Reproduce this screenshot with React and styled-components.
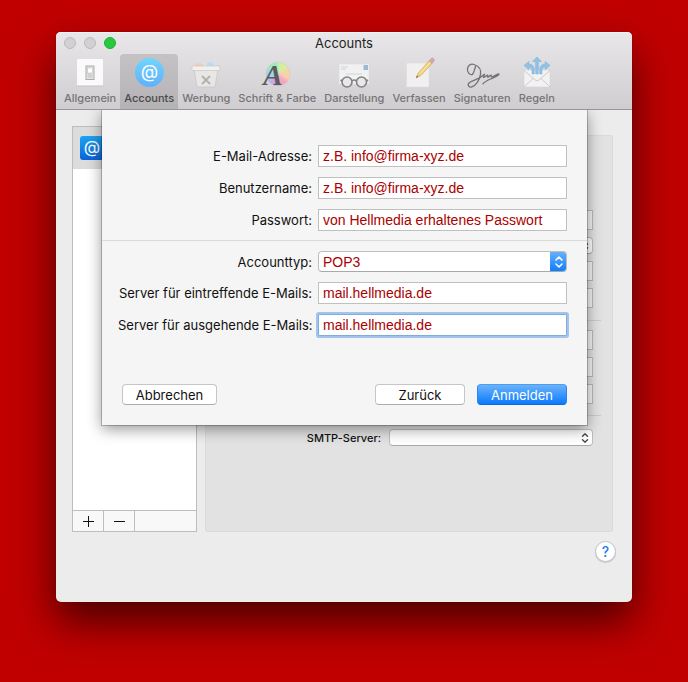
import styled, { createGlobalStyle, css } from 'styled-components';

const GlobalStyle = createGlobalStyle`
  * {
    box-sizing: border-box;
  }

  body {
    margin: 0;
    background: #c00000;
    font-family: Inter, Roboto, 'Liberation Sans', sans-serif;
    font-size: 13px;
    color: #111;
  }

  button, input, select {
    font-family: inherit;
    font-size: 13px;
    margin: 0;
  }
`;

const Desktop = styled.main`
  padding: 32px 56px 80px;
`;

const Window = styled.section`
  background: #ececec;
  border-radius: 5px;
  box-shadow: 0 20px 42px rgba(0, 0, 0, 0.62), 0 0 1px rgba(0, 0, 0, 0.5);
`;

const Header = styled.header`
  background: linear-gradient(#e9e7e9, #cfcdcf);
  border-bottom: 1px solid #979597;
  border-radius: 5px 5px 0 0;
  box-shadow: inset 0 1px 0 #f5f4f5;
`;

const TitleBar = styled.div`
  display: grid;
  grid-template-columns: 1fr auto 1fr;
  align-items: center;
  height: 22px;
  padding: 0 8px;
`;

const Title = styled.h1`
  margin: 0;
  font-size: 13px;
  font-weight: 400;
  line-height: 22px;
  color: #222;
`;

const Lights = styled.div`
  display: flex;
  gap: 8px;
`;

const Light = styled.button`
  width: 12px;
  height: 12px;
  padding: 0;
  border: 1px solid ${({ $on }) => ($on ? '#22ae35' : '#bcbabc')};
  border-radius: 50%;
  background: ${({ $on }) => ($on ? '#28c93f' : '#d2d0d2')};
`;

const Toolbar = styled.nav`
  display: flex;
  padding-left: 4px;
`;

const Tool = styled.button`
  display: flex;
  flex-direction: column;
  align-items: center;
  height: 55px;
  padding: 3px 4px 0;
  border: 0;
  border-radius: 4px 4px 0 0;
  background: ${({ $active }) => ($active ? 'rgba(0, 0, 0, 0.13)' : 'none')};
  color: ${({ $active }) => ($active ? '#4a494a' : '#767476')};

  svg {
    display: block;
    overflow: visible;
  }

  span {
    margin-top: 2px;
    font-size: 11px;
    font-weight: 500;
    line-height: 14px;
    white-space: nowrap;
  }
`;

const Body = styled.div`
  position: relative;
  padding: 16px 16px 40px;
`;

const Columns = styled.div`
  display: flex;
  gap: 8px;
  padding-right: 3px;
`;

const Sidebar = styled.aside`
  display: flex;
  flex-direction: column;
  width: 125px;
  min-height: 406px;
  border: 1px solid #bdbdbd;
  background: #fff;
`;

const AccountRow = styled.div`
  height: 42px;
  padding: 9px 7px;
  background: #dcdcdc;
`;

const AccountBadge = styled.div`
  width: 24px;
  height: 24px;
  border-radius: 3px;
  background: linear-gradient(#1ea4f3, #0b62d8);
  color: #fff;
  font-size: 17px;
  line-height: 22px;
  text-align: center;
`;

const SidebarFooter = styled.div`
  display: flex;
  height: 21px;
  margin-top: auto;
  border-top: 1px solid #bdbdbd;
  background: #f8f8f8;
`;

const FooterButton = styled.button`
  display: flex;
  align-items: center;
  justify-content: center;
  width: 31px;
  padding: 0;
  border: 0;
  border-right: 1px solid #bdbdbd;
  background: none;
`;

const Pane = styled.section`
  flex: 1;
  margin-top: 9px;
  padding: 74px 11px 0;
  border: 1px solid #dadada;
  border-radius: 3px;
  background: #e2e2e2;
`;

const PaneGroup = styled.div`
  display: flex;
  flex-direction: column;
  gap: 7px;
  padding-right: 8px;
`;

const PaneRow = styled.div`
  display: grid;
  grid-template-columns: 164px 1fr;
  gap: 8px;
  align-items: center;

  label {
    font-size: 11px;
    font-weight: 500;
    text-align: right;
  }
`;

const PaneInput = styled.input`
  grid-column: 2;
  min-width: 0;
  height: 20px;
  border: 1px solid #bababa;
  background: #f4f4f4;
`;

const Divider = styled.hr`
  height: 1px;
  margin: ${({ $margin }) => $margin || '0'};
  border: 0;
  background: ${({ $dark }) => ($dark ? '#cbcbcb' : '#dadada')};
`;

const SelectBox = styled.div`
  display: flex;
  grid-column: 2;
  height: ${({ $small }) => ($small ? '17px' : '21px')};
  border: 1px solid #bebebe;
  border-bottom-color: #a9a9a9;
  border-radius: 4px;
  background: #fff;
  overflow: hidden;

  select {
    flex: 1;
    min-width: 0;
    padding: 0 4px;
    border: 0;
    outline: 0;
    appearance: none;
    background: none;
  }
`;

const Stepper = styled.span`
  display: flex;
  align-items: center;
  justify-content: center;
  width: 14px;
  color: #444;

  ${({ $blue }) =>
    $blue &&
    css`
      width: 17px;
      margin: -1px -1px -1px 0;
      background: linear-gradient(#6bb3fa, #0b7bfd);
      color: #fff;
    `}
`;

const HelpBar = styled.div`
  display: flex;
  justify-content: flex-end;
  margin-top: 9px;
`;

const HelpButton = styled.button`
  width: 21px;
  height: 21px;
  padding: 0;
  border: 1px solid #c4c4c4;
  border-radius: 50%;
  background: #fff;
  box-shadow: 0 1px 1px rgba(0, 0, 0, 0.15);
  color: #1a7cf0;
  font-size: 14px;
  font-weight: 500;
  line-height: 18px;
`;

const Sheet = styled.form`
  position: absolute;
  top: 0;
  left: 46px;
  right: 45px;
  padding: 35px 0 20px;
  background: #f5f5f5;
  box-shadow: 0 0 0 1px rgba(0, 0, 0, 0.22), 0 4px 14px rgba(0, 0, 0, 0.42);
  clip-path: inset(0 -40px -40px -40px);
`;

const SheetGroup = styled.div`
  display: flex;
  flex-direction: column;
  gap: 10px;
  padding: 0 20px 0 16px;
`;

const SheetRow = styled.div`
  display: grid;
  grid-template-columns: 194px 1fr;
  gap: 6px;
  align-items: center;

  label {
    text-align: right;
    white-space: nowrap;
  }

  input, select {
    color: #ab0000;
    font-family: 'Liberation Sans', Arial, sans-serif;
    font-size: 14px;
  }
`;

const TextInput = styled.input`
  min-width: 0;
  height: 22px;
  padding: 0 4px;
  border: 1px solid #c0c0c0;
  outline: 0;
  background: #fff;

  ${({ $focused }) =>
    $focused &&
    css`
      border-color: #7fabde;
      border-radius: 1px;
      box-shadow: 0 0 0 2px #a3c4ec;
    `}
`;

const Buttons = styled.div`
  display: flex;
  gap: 12px;
  margin-top: 48px;
  padding: 0 20px;
`;

const PushButton = styled.button`
  width: 90px;
  height: 21px;
  padding: 0;
  border: 1px solid #c6c6c6;
  border-bottom-color: #adadad;
  border-radius: 4px;
  background: #fff;
  color: #111;
  line-height: 18px;

  ${({ $cancel }) =>
    $cancel &&
    css`
      width: 95px;
      margin-right: auto;
    `}

  ${({ $primary }) =>
    $primary &&
    css`
      border-color: #4a9ff5 #2787f3 #0d6be0;
      background: linear-gradient(#6bb3fa, #0b7bfd);
      color: #fff;
    `}
`;

const Icon = ({ children }) => (
  <svg width="32" height="32" viewBox="0 0 32 32" fill="none" aria-hidden="true">
    {children}
  </svg>
);

const GeneralIcon = () => (
  <Icon>
    <rect x="3" y="2.5" width="26" height="27" fill="#c4c2c4" />
    <rect x="3" y="2" width="26" height="26.5" fill="#fafafa" />
    <rect x="12" y="9" width="8" height="13.5" fill="#e6e6e6" stroke="#aaa" />
    <rect x="13.5" y="11" width="5" height="5" fill="#fff" stroke="#bbb" strokeWidth="0.6" />
    <rect x="13.5" y="16" width="5" height="5" fill="#d2d2d2" />
  </Icon>
);

const AccountsIcon = () => (
  <Icon>
    <defs>
      <linearGradient id="at" x1="0" y1="0" x2="0" y2="1">
        <stop offset="0" stopColor="#72d5fb" />
        <stop offset="1" stopColor="#5fb0fb" />
      </linearGradient>
    </defs>
    <circle cx="16.5" cy="15.5" r="14.5" fill="url(#at)" />
    <text x="16.5" y="21" textAnchor="middle" fontSize="18" fill="#fff">@</text>
  </Icon>
);

const JunkIcon = () => (
  <Icon>
    <path d="M4 10 6 6l5 1 3-2 4 2 5-2 3 2 2 4z" fill="#d8e3e8" />
    <path d="M4 9 7 6l6 1v3H4z" fill="#f0cfae" />
    <path d="m17 6 4-1 3 2-1 3h-6z" fill="#b9dcf0" />
    <path d="M4 12h24l-3 18H7z" fill="#e9e7e5" stroke="#c6c4c2" strokeWidth="0.7" />
    <rect x="2" y="9" width="28" height="4.5" rx="1" fill="#f2f0ee" stroke="#c9c7c5" strokeWidth="0.7" />
    <path d="m12 19 8 8m0-8-8 8" stroke="#b3b1af" strokeWidth="2" />
  </Icon>
);

const FontsIcon = () => (
  <Icon>
    <defs>
      <filter id="soft" x="-20%" y="-20%" width="140%" height="140%">
        <feGaussianBlur stdDeviation="1.5" />
      </filter>
      <clipPath id="wheel">
        <circle cx="17" cy="17" r="12" />
      </clipPath>
    </defs>
    <g clipPath="url(#wheel)">
      <rect x="3" y="3" width="28" height="28" fill="#e4e2e4" />
      <g filter="url(#soft)">
        <path d="M17 17V1h12l4 6z" fill="#d5efa0" />
        <path d="m17 17 16-10v20z" fill="#f8d3a8" />
        <path d="m17 17 16 10-6 6H17z" fill="#f7a5bd" />
        <path d="M17 17v16H5l-4-6z" fill="#c9a6ec" />
        <path d="M17 17 1 27V7z" fill="#9cd8ec" />
        <path d="M17 17 1 7l4-6h12z" fill="#9debb8" />
      </g>
    </g>
    <circle cx="17" cy="17" r="12" stroke="#c9c5c9" strokeWidth="0.5" />
    <text x="12" y="28" textAnchor="middle" fontFamily="Liberation Serif, serif" fontStyle="italic" fontWeight="700" fontSize="29" fill="#5c5b60">A</text>
  </Icon>
);

const ViewIcon = () => (
  <Icon>
    <rect x="1" y="7" width="30" height="20" fill="#f2f1f2" stroke="#dcdadc" strokeWidth="0.5" />
    <path d="M3 10h7M3 12h5M8 17h16" stroke="#c5cbd2" strokeWidth="0.8" />
    <rect x="25.5" y="8" width="4.5" height="5" fill="#9db8d2" />
    <circle cx="9" cy="25" r="5" fill="#e9e8e9" stroke="#838183" strokeWidth="1.6" />
    <circle cx="23.5" cy="25" r="5" fill="#e9e8e9" stroke="#838183" strokeWidth="1.6" />
    <path d="M14 24q2.2-2 4.5 0M4 24l-1.5-1M28.5 24l1.5-1" stroke="#838183" strokeWidth="1.6" />
  </Icon>
);

const ComposeIcon = () => (
  <Icon>
    <rect x="3.5" y="6" width="22.5" height="24" fill="#f1f0f1" stroke="#dedcde" strokeWidth="0.6" />
    <path d="m13 21 2.2-5L26 3.800l3 2.700L18 18.500z" fill="#efd07a" stroke="#cfa95a" strokeWidth="0.6" />
    <path d="m16.5 17.2 11-12" stroke="#f9e6a8" strokeWidth="1.2" />
    <path d="m26 3.8 1.8-2a2 2 0 0 1 3 2.7L29 6.500z" fill="#d9a5ae" stroke="#b5979c" strokeWidth="0.5" />
    <path d="m13 21 1-2.500 1.4 1.3z" fill="#666" />
  </Icon>
);

const SignatureIcon = () => (
  <Icon>
    <path
      d="M9.500 9.500C8.500 13 8 15.500 6.500 17.500 3.500 18.500 1 15 1.500 11.500 2 8 5 6.500 8 7.500c4.500 1.500 7.500 5 6.500 10C13.500 23 10 29 5.500 30c-3.500.5-4.500-3-1.500-4.800C8 23 13 22.500 18.500 17.200c-.5 1.500-1.500 3-.8 3.300 1 .4 3-2.800 4-2.400.7.3-.7 1.900 0 2.100 1 .3 2.300-2.200 3.300-2 .7.2-.3 1.600.4 1.700 1.800.2 4.600-2.900 7.600-2.900-.5 2.200-5.500 3.500-8.500 5-3.500 1.600-6 2.800-7.500 4.800"
      stroke="#757475"
      strokeWidth="1.3"
      strokeLinecap="round"
      strokeLinejoin="round"
    />
  </Icon>
);

const RulesIcon = () => (
  <Icon>
    <rect x="3" y="13" width="26" height="17" fill="#f3f2f3" stroke="#d6d4d6" strokeWidth="0.6" />
    <path d="m3 30 9.500-9M29 30l-9.500-9M3 13.500l11 9.500q2 1.500 4 0l11-9.500" stroke="#c8c6c8" strokeWidth="0.9" />
    <g fill="#8fc3e8" stroke="#75acd4" strokeWidth="0.5">
      <path d="M16 0l4.500 4.500H17.300V17h-2.600V4.500H11.500z" />
      <path d="M3 8.500 7.800 4.500V7C11.500 7.300 13.300 9.500 13.300 13v4h-2.300v-3.500q0-3.300-3.200-3.500v2.500z" />
      <path d="M29 8.500 24.200 4.500V7C20.500 7.300 18.700 9.500 18.700 13v4h2.300v-3.500q0-3.300 3.200-3.500v2.500z" />
    </g>
  </Icon>
);

const Arrows = ({ size = 12 }) => (
  <svg width={size} height={size} viewBox="0 0 12 12" fill="none" stroke="currentColor" strokeWidth="1.6" strokeLinecap="round" strokeLinejoin="round" aria-hidden="true">
    <path d="M3 4 6 1l3 3M3 8l3 3 3-3" />
  </svg>
);

const tools = [
  { label: 'Allgemein', icon: GeneralIcon },
  { label: 'Accounts', icon: AccountsIcon, active: true },
  { label: 'Werbung', icon: JunkIcon },
  { label: 'Schrift & Farbe', icon: FontsIcon },
  { label: 'Darstellung', icon: ViewIcon },
  { label: 'Verfassen', icon: ComposeIcon },
  { label: 'Signaturen', icon: SignatureIcon },
  { label: 'Regeln', icon: RulesIcon },
];

const Field = ({ id, label, value, focused }) => (
  <SheetRow>
    <label htmlFor={id}>{label}</label>
    <TextInput id={id} defaultValue={value} $focused={focused} />
  </SheetRow>
);

const App = () => {
  return (
    <>
      <GlobalStyle />
      <Desktop>
        <Window>
          <Header>
            <TitleBar>
              <Lights>
                <Light type="button" aria-label="Schließen" />
                <Light type="button" aria-label="Minimieren" />
                <Light type="button" aria-label="Zoomen" $on />
              </Lights>
              <Title>Accounts</Title>
            </TitleBar>
            <Toolbar>
              {tools.map(({ label, icon: ToolIcon, active }) => (
                <Tool key={label} type="button" $active={active}>
                  <ToolIcon />
                  <span>{label}</span>
                </Tool>
              ))}
            </Toolbar>
          </Header>

          <Body>
            <Columns>
              <Sidebar>
                <AccountRow>
                  <AccountBadge>@</AccountBadge>
                </AccountRow>
                <SidebarFooter>
                  <FooterButton type="button" aria-label="Account hinzufügen">
                    <svg width="11" height="11" viewBox="0 0 11 11" stroke="#111">
                      <path d="M0 5.5h11M5.5 0v11" />
                    </svg>
                  </FooterButton>
                  <FooterButton type="button" aria-label="Account entfernen">
                    <svg width="11" height="11" viewBox="0 0 11 11" stroke="#111">
                      <path d="M0 5.5h11" />
                    </svg>
                  </FooterButton>
                </SidebarFooter>
              </Sidebar>

              <Pane>
                <PaneGroup>
                  <PaneRow><PaneInput aria-label="Beschreibung" /></PaneRow>
                  <PaneRow>
                    <SelectBox $small>
                      <select aria-label="Alias" />
                      <Stepper><Arrows size={10} /></Stepper>
                    </SelectBox>
                  </PaneRow>
                  <PaneRow><PaneInput aria-label="E-Mail" /></PaneRow>
                  <PaneRow><PaneInput aria-label="Name" /></PaneRow>
                </PaneGroup>
                <Divider $dark $margin="12px 0 9px" />
                <PaneGroup>
                  <PaneRow><PaneInput aria-label="Server" /></PaneRow>
                  <PaneRow><PaneInput aria-label="Benutzer" /></PaneRow>
                  <PaneRow><PaneInput aria-label="Kennwort" /></PaneRow>
                </PaneGroup>
                <Divider $dark $margin="11px 0 13px" />
                <PaneGroup>
                  <PaneRow>
                    <label htmlFor="smtp">SMTP-Server:</label>
                    <SelectBox $small>
                      <select id="smtp" />
                      <Stepper><Arrows size={10} /></Stepper>
                    </SelectBox>
                  </PaneRow>
                </PaneGroup>
              </Pane>
            </Columns>

            <HelpBar>
              <HelpButton type="button" aria-label="Hilfe">?</HelpButton>
            </HelpBar>

            <Sheet onSubmit={(e) => e.preventDefault()}>
              <SheetGroup>
                <Field id="email" label="E-Mail-Adresse:" value="z.B. info@firma-xyz.de" />
                <Field id="user" label="Benutzername:" value="z.B. info@firma-xyz.de" />
                <Field id="password" label="Passwort:" value="von Hellmedia erhaltenes Passwort" />
              </SheetGroup>
              <Divider $margin="9px 0 10px" />
              <SheetGroup>
                <SheetRow>
                  <label htmlFor="type">Accounttyp:</label>
                  <SelectBox>
                    <select id="type" defaultValue="POP3">
                      <option>POP3</option>
                      <option>IMAP</option>
                    </select>
                    <Stepper $blue><Arrows /></Stepper>
                  </SelectBox>
                </SheetRow>
                <Field id="incoming" label="Server für eintreffende E-Mails:" value="mail.hellmedia.de" />
                <Field id="outgoing" label="Server für ausgehende E-Mails:" value="mail.hellmedia.de" focused />
              </SheetGroup>
              <Buttons>
                <PushButton type="button" $cancel>Abbrechen</PushButton>
                <PushButton type="button">Zurück</PushButton>
                <PushButton type="submit" $primary>Anmelden</PushButton>
              </Buttons>
            </Sheet>
          </Body>
        </Window>
      </Desktop>
    </>
  );
};

export default App;
